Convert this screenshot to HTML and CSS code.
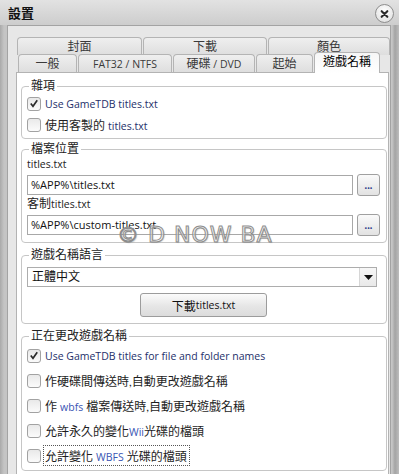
FILE: index.html
```html
<!DOCTYPE html>
<html lang="zh-Hant">
<head>
<meta charset="utf-8">
<title>設置</title>
<link rel="stylesheet" href="styles.css">
</head>
<body>
<div class="window">
  <div class="titlebar">
    <span class="title">設置</span>
    <span class="close">
      <svg width="18" height="18" viewBox="0 0 18 18"><path d="M6 6 L12 12 M12 6 L6 12" stroke="#2a2a2a" stroke-width="2.2" stroke-linecap="round"/></svg>
    </span>
  </div>
  <div class="client">
    <div class="tabrow row1">
      <div class="tab w1a">封面</div>
      <div class="tab w1b">下載</div>
      <div class="tab w1c">顏色</div>
    </div>
    <div class="tabrow row2">
      <div class="tab w2a">一般</div>
      <div class="tab w2b"><span class="l">FAT32 / NTFS</span></div>
      <div class="tab w2c">硬碟<span class="l">&nbsp;/ DVD</span></div>
      <div class="tab w2d">起始</div>
      <div class="tab w2e selected">遊戲名稱</div>
    </div>
    <div class="pane">
      <div class="group g1">
        <div class="gtitle">雜項</div>
        <div class="check"><span class="box"><svg width="13" height="13" viewBox="0 0 13 13"><path d="M3 6.5 L5.4 9.5 L10 3" fill="none" stroke="#2b2b2b" stroke-width="1.8"/></svg></span><span class="l en">Use GameTDB titles.txt</span></div>
        <div class="check"><span class="box"></span><span>使用客製的 <span class="l en">titles.txt</span></span></div>
      </div>
      <div class="group g2">
        <div class="gtitle">檔案位置</div>
        <div class="flabel"><span class="l">titles.txt</span></div>
        <div class="frow">
          <div class="field l">%APP%\titles.txt</div>
          <div class="dots">...</div>
        </div>
        <div class="flabel second">客制<span class="l">titles.txt</span></div>
        <div class="frow third">
          <div class="field l">%APP%\custom-titles.txt</div>
          <div class="dots">...</div>
        </div>
      </div>
      <div class="group g3">
        <div class="gtitle">遊戲名稱語言</div>
        <div class="combo">
          <span class="ctext">正體中文</span>
          <span class="carrow"><svg width="9" height="5" viewBox="0 0 9 5"><path d="M0 0 H9 L4.5 5 Z" fill="#111"/></svg></span>
        </div>
        <div class="btn">下載<span class="l">titles.txt</span></div>
      </div>
      <div class="group g4">
        <div class="gtitle">正在更改遊戲名稱</div>
        <div class="check r"><span class="box"><svg width="13" height="13" viewBox="0 0 13 13"><path d="M3 6.5 L5.4 9.5 L10 3" fill="none" stroke="#2b2b2b" stroke-width="1.8"/></svg></span><span class="l en">Use GameTDB titles for file and folder names</span></div>
        <div class="check r"><span class="box"></span><span>作硬碟間傳送時,自動更改遊戲名稱</span></div>
        <div class="check r"><span class="box"></span><span>作 <span class="l blue">wbfs</span> 檔案傳送時,自動更改遊戲名稱</span></div>
        <div class="check r"><span class="box"></span><span>允許永久的變化<span class="l blue">Wii</span>光碟的檔頭</span></div>
        <div class="check r"><span class="box"></span><span class="focus">允許變化 <span class="l blue">WBFS</span> 光碟的檔頭</span></div>
      </div>
    </div>
  </div>
  <div class="watermark">© D NOW BA</div>
</div>
</body>
</html>
```
FILE: styles.css
```css
* { box-sizing: border-box; }
html, body { margin: 0; padding: 0; }
body {
  width: 399px;
  height: 474px;
  overflow: hidden;
  background: linear-gradient(90deg, #a9a9a9 0, #c4c4c4 4px, #c6c6c6 392px, #a4a4a4 395px, #bdbdbd 399px);
  font-family: Lato, "Noto Sans CJK TC", sans-serif;
  font-size: 12px;
  color: #1e1e1e;
}
.l { font-family: "Open Sans", "Noto Sans CJK TC", sans-serif; font-size: 10.5px; }
.window {
  height: 474px;
  display: flex;
  flex-direction: column;
  position: relative;
}
.titlebar {
  height: 25px;
  flex: none;
  display: flex;
  align-items: center;
  justify-content: space-between;
  padding: 0 5px 0 8px;
  background: linear-gradient(#e2e2e2, #cdcdcd);
}
.title {
  font-family: "Noto Sans CJK TC", sans-serif;
  font-weight: bold;
  font-size: 13px;
  color: #111;
}
.close {
  width: 19px;
  height: 19px;
  margin-top: 2px;
  border-radius: 50%;
  border: 1px solid #8e8e8e;
  background: radial-gradient(circle at 50% 35%, #ffffff, #dcdcdc);
  display: flex;
  align-items: center;
  justify-content: center;
}
.client {
  flex: 1;
  margin: 0 8px 0 7px;
  background: #e7e7e7;
  border: 1px solid #a3a3a3;
  border-bottom: none;
  padding: 11px 0 0 8px;
  display: flex;
  flex-direction: column;
}
.tabrow {
  display: flex;
  gap: 1px;
  flex: none;
}
.row1 { margin-left: 1px; height: 18px; }
.row2 { margin-left: 2px; height: 18px; margin-top: -1px; align-items: flex-end; }
.tab {
  height: 18px;
  border: 1px solid #b4b4b4;
  border-bottom: none;
  border-radius: 4px 4px 0 0;
  background: linear-gradient(#efefef, #dedede);
  display: flex;
  align-items: center;
  justify-content: center;
  color: #3a3a3a;
  font-size: 12px;
  line-height: 14px;
}
.w1a { width: 125px; }
.w1b { width: 124px; }
.w1c { width: 122px; }
.w2a { width: 59px; }
.w2b { width: 94px; }
.w2c { width: 82px; }
.w2d { width: 57px; }
.w2e { width: 66px; }
.tab.selected {
  height: 21px;
  margin-bottom: -1px;
  background: linear-gradient(#f6f6f6, #ffffff);
  color: #000;
  position: relative;
  z-index: 1;
  padding-bottom: 2px;
}
.pane {
  flex: 1;
  margin-right: 1px;
  background: #fff;
  border: 1px solid #b3b3b3;
  border-bottom: none;
  padding: 0 1px 0 4px;
  display: flex;
  flex-direction: column;
}
.group {
  border: 1px solid #c6c6c6;
  border-radius: 4px;
  padding: 0 6px 3px 5px;
  display: flex;
  flex-direction: column;
  flex: none;
}
.g1 { margin-top: 13px; }
.g2 { margin-top: 10px; padding-bottom: 6px; }
.g3 { margin-top: 12px; padding-bottom: 6px; }
.g4 { margin-top: 12px; padding-bottom: 2px; }
.gtitle {
  margin: -8px 0 0 2px;
  padding: 0 2px;
  height: 14px;
  line-height: 14px;
  background: #fff;
  align-self: flex-start;
  color: #222;
}
.check {
  height: 21px;
  display: flex;
  align-items: center;
  gap: 4px;
  color: #1e1e1e;
}
.check.r { height: 25px; }
.box {
  width: 14px;
  height: 14px;
  flex: none;
  border: 1px solid #a2a2a2;
  border-radius: 3px;
  background: linear-gradient(#e9e9e9, #fbfbfb);
  display: flex;
  align-items: center;
  justify-content: center;
}
.en { color: #24306a; }
.blue { color: #3a55b4; }
.focus {
  border: 1px dotted #555;
  padding: 1px 2px 1px 1px;
  margin-left: -2px;
}
.flabel {
  height: 14px;
  line-height: 14px;
  margin-top: 1px;
  color: #222;
}
.flabel.second { margin-top: 1px; }
.frow {
  margin-top: 3px;
  height: 22px;
  display: flex;
  align-items: center;
  gap: 4px;
}
.frow.third { margin-top: 3px; }
.field {
  flex: 1;
  height: 20px;
  border: 1px solid #a8a8a8;
  background: #fff;
  padding-left: 3px;
  line-height: 18px;
  color: #111;
}
.field.l { font-size: 11px; }
.dots {
  width: 23px;
  height: 22px;
  flex: none;
  border: 1px solid #a0a0a0;
  border-radius: 3px;
  background: linear-gradient(#fafafa, #e2e2e2);
  display: flex;
  align-items: center;
  justify-content: center;
  color: #2a3a8a;
  font-size: 11px;
  font-weight: bold;
  line-height: 1;
  padding-bottom: 2px;
}
.combo {
  margin: 5px 3px 0 0;
  height: 20px;
  border: 1px solid #adadad;
  background: #fff;
  display: flex;
  align-items: stretch;
}
.ctext {
  flex: 1;
  padding-left: 4px;
  line-height: 18px;
  color: #111;
}
.carrow {
  width: 17px;
  border-left: 1px solid #d6d6d6;
  background: linear-gradient(#f7f7f7, #e9e9e9);
  display: flex;
  align-items: center;
  justify-content: center;
}
.btn {
  margin-top: 6px;
  align-self: center;
  width: 127px;
  height: 24px;
  border: 1px solid #9c9c9c;
  border-radius: 3px;
  background: linear-gradient(#fbfbfb, #e6e6e6 55%, #dcdcdc);
  display: flex;
  align-items: center;
  justify-content: center;
  color: #111;
}
.watermark {
  position: absolute;
  left: 117px;
  top: 222px;
  font-family: "DejaVu Sans", sans-serif;
  font-size: 22px;
  letter-spacing: 1px;
  color: rgba(255, 255, 255, 0.55);
  -webkit-text-stroke: 1px #8c8c8c;
  text-shadow: 1px 1px 1px rgba(120, 120, 120, 0.35);
  pointer-events: none;
}
```
